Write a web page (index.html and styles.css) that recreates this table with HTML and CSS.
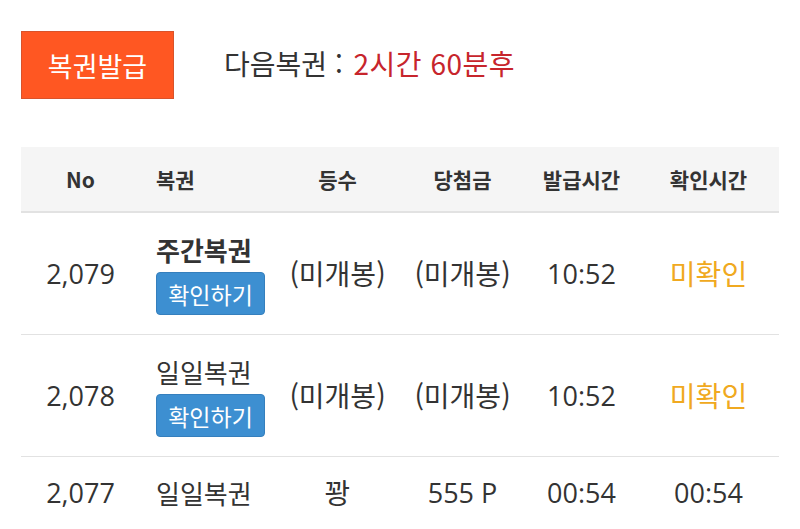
FILE: index.html
```html
<!DOCTYPE html>
<html lang="ko">
<head>
<meta charset="utf-8">
<link rel="stylesheet" href="styles.css">
</head>
<body>
<div class="page">
  <div class="top">
    <button class="issue">복권발급</button>
    <div class="next">다음복권 : <span class="remain">2시간 60분후</span></div>
  </div>
  <table class="list">
    <colgroup>
      <col class="c-no"><col class="c-name"><col class="c-rank"><col class="c-prize"><col class="c-issue"><col class="c-check">
    </colgroup>
    <thead>
      <tr><th>No</th><th class="left">복권</th><th>등수</th><th>당첨금</th><th>발급시간</th><th>확인시간</th></tr>
    </thead>
    <tbody>
      <tr class="tall">
        <td class="num">2,079</td>
        <td class="left"><div class="name bold">주간복권</div><button class="check">확인하기</button></td>
        <td>(미개봉)</td><td>(미개봉)</td><td class="num">10:52</td><td class="pending">미확인</td>
      </tr>
      <tr class="tall">
        <td class="num">2,078</td>
        <td class="left"><div class="name">일일복권</div><button class="check">확인하기</button></td>
        <td>(미개봉)</td><td>(미개봉)</td><td class="num">10:52</td><td class="pending">미확인</td>
      </tr>
      <tr class="short">
        <td class="num">2,077</td>
        <td class="left"><div class="name">일일복권</div></td>
        <td>꽝</td><td class="num">555 P</td><td class="num">00:54</td><td class="num">00:54</td>
      </tr>
    </tbody>
  </table>
</div>
</body>
</html>
```
FILE: styles.css
```css
* { box-sizing: border-box; }
html, body { margin: 0; padding: 0; background: #fff; }
body { font-family: "Noto Sans CJK KR", "Noto Sans", sans-serif; color: #333; overflow: hidden; }
.page { padding: 31px 21px 0 21px; }
.top { display: flex; align-items: center; gap: 50px; }
.issue {
  width: 153px; height: 68px;
  background: #ff5722; border: 1px solid #d9532a;
  color: #fff; font-family: inherit; font-size: 27px; padding: 0;
}
.next { font-size: 28px; color: #333; margin-top: -4px; }
.remain { color: #c7252c; margin-left: 3px; letter-spacing: 0.5px; }
.list { width: 758px; margin-top: 48px; border-collapse: collapse; table-layout: fixed; }
.c-no { width: 119px; }
.c-name { width: 135px; }
.c-rank { width: 125px; }
.c-prize { width: 125px; }
.c-issue { width: 113px; }
.c-check { width: 141px; }
th {
  background: #f5f5f5; height: 65px; font-size: 21px; font-weight: 700;
  border-bottom: 2px solid #e2e2e2; text-align: center; padding: 0; color: #333;
}
td { text-align: center; font-size: 28px; padding: 0; border-bottom: 1px solid #e2e2e2; vertical-align: middle; }
td.num { font-family: "Open Sans", "Noto Sans CJK KR", sans-serif; font-size: 27px; }
th.left, td.left { text-align: left; padding-left: 16px; }
tr.tall td { height: 122px; }
tr.short td { height: 72px; border-bottom: none; }
.name { font-size: 26px; line-height: 34px; margin-top: 2px; }
.name.bold { font-weight: 700; }
.check {
  margin-top: 5px; width: 109px; height: 43px;
  background: #3d8fd1; border: 1px solid #357fbd; border-radius: 4px;
  color: #fff; font-family: inherit; font-size: 23px; padding: 0;
}
.pending { color: #f0a920; }
```
